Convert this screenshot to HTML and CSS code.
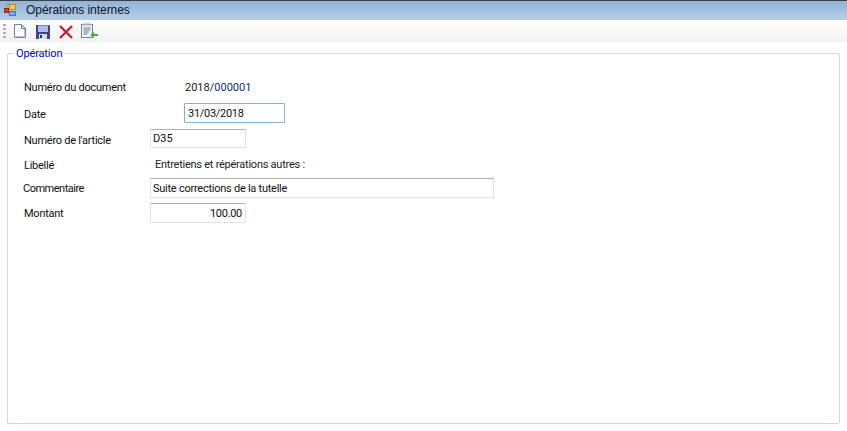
FILE: index.html
```html
<!DOCTYPE html>
<html lang="fr">
<head>
<meta charset="utf-8">
<title>Opérations internes</title>
<link rel="stylesheet" href="styles.css">
</head>
<body>
<header class="titlebar">
  <svg class="app-icon" width="16" height="16" viewBox="0 0 16 16">
    <path d="M3 5V2M3 2h3M4 12h3" fill="none" stroke="#8a8f96"/>
    <rect x="5.500" y="2.500" width="6" height="5" fill="#f6cd4a" stroke="#b58d2c"/>
    <rect x="0.500" y="6.500" width="4" height="4" fill="#d8402c" stroke="#96281a"/>
    <rect x="5.500" y="9.500" width="6" height="4" fill="#7fa9e6" stroke="#4a72b4"/>
  </svg>
  <span class="title">Opérations internes</span>
</header>
<nav class="toolbar">
  <span class="grip"></span>
  <svg class="tool" width="16" height="16" viewBox="0 0 16 16">
    <path d="M2.500 1.500h7l4 4v9h-11z" fill="#fdfeff" stroke="#6f84a0"/>
    <path d="M9.500 1.500v4h4z" fill="#dfe7f0" stroke="#6f84a0"/>
    <path d="M3.500 13.500h9M12.500 6v7" stroke="#b9c7d8"/>
  </svg>
  <svg class="tool" width="16" height="16" viewBox="0 0 16 16">
    <path d="M1 2h13l1 1v13H1z" fill="#37468f"/>
    <rect x="3" y="2.500" width="10" height="6.500" fill="#aebcea"/>
    <rect x="4" y="11" width="8" height="5" fill="#d9dce6"/>
    <rect x="5" y="12" width="2" height="3" fill="#2c3350"/>
  </svg>
  <svg class="tool" width="16" height="16" viewBox="0 0 16 16">
    <path d="M2 3l12 12M14 3L2 15" stroke="#c8202c" stroke-width="2.400" fill="none"/>
  </svg>
  <svg class="tool" width="18" height="16" viewBox="0 0 18 16">
    <rect x="0.500" y="1.500" width="11" height="13" fill="#eef3f7" stroke="#5a8eaa"/>
    <rect x="2" y="0.500" width="8" height="2" fill="#9db3c4"/>
    <path d="M2.500 5h7M2.500 7h7M2.500 9h5M2.500 11h4" stroke="#77797c"/>
    <path d="M17 11h-4V9l-4 3 4 3v-2h4z" fill="#48ab3f"/>
  </svg>
</nav>
<main class="content">
  <fieldset class="group">
    <legend class="legend">Opération</legend>
    <div class="row row-doc">
      <span class="label">Numéro du document</span>
      <span class="value value-doc">2018/<span class="docnum">000001</span></span>
    </div>
    <div class="row row-date">
      <span class="label label-low">Date</span>
      <input class="field field-date" value="31/03/2018">
    </div>
    <div class="row row-article">
      <span class="label label-low">Numéro de l'article</span>
      <input class="field field-article" value="D35">
    </div>
    <div class="row row-libelle">
      <span class="label">Libellé</span>
      <span class="value value-libelle">Entretiens et répérations autres :</span>
    </div>
    <div class="row row-comment">
      <span class="label label-comment">Commentaire</span>
      <input class="field field-comment" value="Suite corrections de la tutelle">
    </div>
    <div class="row row-amount">
      <span class="label">Montant</span>
      <input class="field field-amount" value="100.00">
    </div>
  </fieldset>
</main>
</body>
</html>
```

FILE: styles.css
```css
* { box-sizing: border-box; }
html, body {
  margin: 0;
  width: 847px;
  height: 431px;
  overflow: hidden;
  background: #fff;
  font-family: Roboto, "Liberation Sans", Arial, sans-serif;
  font-size: 11px;
  letter-spacing: -0.25px;
  color: #111;
}
.titlebar {
  height: 20px;
  display: flex;
  align-items: center;
  padding-left: 4px;
  border-top: 1px solid #3c3f45;
  background: linear-gradient(#93b4d8, #b4cce8);
}
.app-icon { flex: none; margin-top: -1px; }
.title {
  margin-left: 6px;
  font-family: "Liberation Sans", Arial, sans-serif;
  font-size: 12px;
  letter-spacing: -0.05px;
  color: #10151c;
  margin-top: -1px;
}
.toolbar {
  height: 22px;
  display: flex;
  align-items: center;
  padding-left: 3px;
  background: linear-gradient(#ffffff, #f1f1f1);
}
.grip {
  width: 3px;
  height: 15px;
  margin-right: 6px;
  background: repeating-linear-gradient(#a9b0b8 0 2px, transparent 2px 4px);
}
.tool { flex: none; margin-right: 7px; }
.content { padding: 4px 7px 0; }
.group {
  margin: 0;
  padding: 0;
  width: 833px;
  height: 378px;
  border: 1px solid #d0d7e0;
  border-radius: 2px;
}
.legend {
  margin-left: 6px;
  padding: 1px 2px 0;
  color: #0000ee;
  line-height: 14px;
  letter-spacing: -0.15px;
}
.row {
  display: flex;
  align-items: center;
  padding-left: 16px;
}
.label { flex: none; width: 126px; padding-top: 1px; }
.label-low { padding-top: 3px; }
.row-doc { height: 20px; margin-top: 16px; }
.row-date { height: 20px; margin-top: 6px; }
.row-article { height: 19px; margin-top: 6px; }
.row-libelle { height: 15px; margin-top: 9px; }
.row-comment { height: 20px; margin-top: 6px; }
.row-amount { height: 20px; margin-top: 5px; }
.label-comment { margin-left: -1px; margin-right: 1px; letter-spacing: -0.5px; }
.value { color: #1c1c1c; }
.value-doc { margin-left: 35px; letter-spacing: 0; }
.docnum { color: #10306e; }
.value-libelle { margin-left: 5px; }
.field {
  height: 100%;
  padding: 0 2px;
  font: inherit;
  letter-spacing: inherit;
  color: #111;
  background: #fff;
  border: 1px solid #e0e2ea;
  border-top-color: #acb0b6;
  border-radius: 1px;
  outline: none;
}
.field-date {
  width: 101px;
  margin-left: 34px;
  padding-left: 3px;
  border-color: #7fb2d8;
  letter-spacing: -0.3px;
}
.field-article { width: 96px; letter-spacing: 0; }
.field-comment { width: 344px; }
.field-amount { width: 96px; padding-right: 3px; text-align: right; letter-spacing: -0.3px; }
```
